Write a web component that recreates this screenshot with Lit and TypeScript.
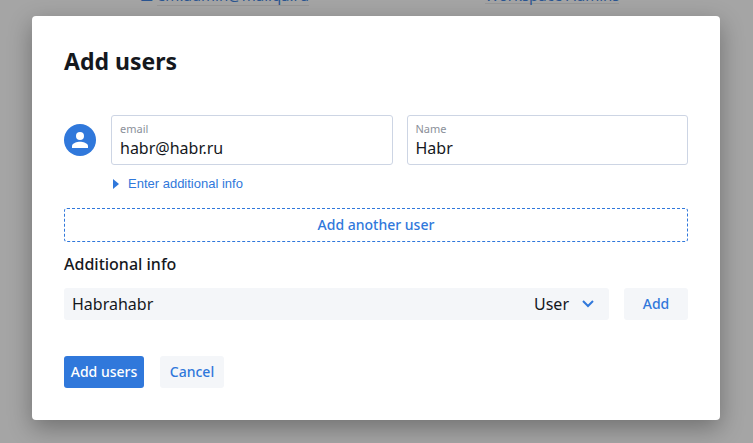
import { LitElement, html, css } from "lit";
import { customElement } from "lit/decorators.js";

@customElement("app-root")
export class AppRoot extends LitElement {
  static styles = css`
    :host {
      display: block;
      position: relative;
      min-height: 100vh;
      box-sizing: border-box;
      padding: 16px 33px 23px 32px;
      overflow: hidden;
      background: #a5a5a5;
      color: #15181d;
      font: 16px/20px "Noto Sans", "Open Sans", sans-serif;
    }
    * {
      box-sizing: border-box;
    }
    .behind {
      position: absolute;
      inset: -17px 0 auto 0;
      display: grid;
      grid-template-columns: 140px 345px 1fr;
      align-items: start;
      justify-items: start;
      font-size: 15px;
      line-height: 24px;
      white-space: nowrap;
    }
    .behind a {
      grid-column: 2;
      color: #2a5591;
      text-decoration: none;
    }
    .behind a + a {
      grid-column: 3;
      height: 21px;
      border-bottom: 1px solid #979797;
    }
    .behind span {
      border-bottom: 1px solid #979797;
    }
    .dialog {
      position: relative;
      display: flex;
      flex-direction: column;
      padding: 32px;
      border-radius: 4px;
      background: #fff;
      box-shadow: 0 8px 24px rgba(0, 0, 0, 0.32);
    }
    h1 {
      margin: 0 0 41px;
      font-size: 23px;
      line-height: 26px;
      font-weight: 700;
    }
    .user {
      display: grid;
      grid-template-columns: 33px 1fr 1fr;
      column-gap: 14px;
      align-items: center;
    }
    .avatar {
      width: 32px;
      height: 32px;
    }
    .field {
      display: flex;
      flex-direction: column;
      height: 50px;
      padding: 4px 8px;
      border: 1px solid #cdd5e4;
      border-radius: 3px;
    }
    .field span {
      color: #8b909a;
      font-size: 11px;
      line-height: 18px;
    }
    input {
      width: 100%;
      padding: 0;
      border: 0;
      outline: 0;
      background: none;
      color: inherit;
      font: inherit;
    }
    button {
      height: 32px;
      padding: 0;
      border: 0;
      border-radius: 3px;
      font: 500 14px/20px "Noto Sans", "Open Sans", sans-serif;
      white-space: nowrap;
      color: #3078db;
      background: #f4f6f9;
    }
    .more {
      display: flex;
      align-items: center;
      align-self: flex-start;
      gap: 9px;
      height: 20px;
      margin: 9px 0 14px 49px;
      background: none;
      font: 13px/20px "Liberation Sans", sans-serif;
    }
    .another {
      height: 34px;
      border: 1px dashed #3078db;
      background: none;
    }
    h2 {
      margin: 12px 0 14px;
      font-size: 16px;
      line-height: 20px;
      font-weight: 500;
    }
    .group {
      display: grid;
      grid-template-columns: 1fr 64px;
      gap: 15px;
    }
    .picker {
      display: flex;
      align-items: center;
      height: 32px;
      padding: 0 14px 0 8px;
      border-radius: 3px;
      background: #f4f6f9;
    }
    .role {
      display: flex;
      align-items: center;
    }
    select {
      width: 47px;
      padding: 0;
      border: 0;
      appearance: none;
      background: none;
      color: inherit;
      font: inherit;
    }
    .actions {
      display: flex;
      gap: 16px;
      margin-top: 36px;
    }
    .actions button {
      width: 64px;
    }
    .actions .primary {
      width: 80px;
      color: #fff;
      background: #3078db;
    }
  `;

  render() {
    return html`
      <div class="behind">
        <a href="#">☰ <span>em.admin@mailqa.ru</span></a>
        <a href="#">Workspace Admins</a>
      </div>
      <form class="dialog" role="dialog" aria-labelledby="title">
        <h1 id="title">Add users</h1>
        <div class="user">
          <svg class="avatar" viewBox="0 0 32 32" aria-hidden="true">
            <circle cx="16" cy="16" r="16" fill="#3078db" />
            <circle cx="16" cy="12" r="4" fill="#fff" />
            <path d="M8 24v-2c0-2.800 5.300-4.200 8-4.200s8 1.400 8 4.200v2z" fill="#fff" />
          </svg>
          <label class="field"><span>email</span><input type="email" value="habr@habr.ru" /></label>
          <label class="field"><span>Name</span><input type="text" value="Habr" /></label>
        </div>
        <button type="button" class="more">
          <svg width="6" height="12" viewBox="0 0 6 12" aria-hidden="true">
            <path d="M0 1l6 5-6 5z" fill="#3078db" />
          </svg>
          Enter additional info
        </button>
        <button type="button" class="another">Add another user</button>
        <h2>Additional info</h2>
        <div class="group">
          <div class="picker">
            <input type="text" value="Habrahabr" aria-label="Group" />
            <label class="role">
              <select aria-label="Role"><option>User</option></select>
              <svg width="14" height="10" viewBox="0 0 14 10" aria-hidden="true">
                <path d="M2 2l5 5 5-5" fill="none" stroke="#3078db" stroke-width="2" />
              </svg>
            </label>
          </div>
          <button type="button">Add</button>
        </div>
        <div class="actions">
          <button type="submit" class="primary">Add users</button>
          <button type="button">Cancel</button>
        </div>
      </form>
    `;
  }
}
